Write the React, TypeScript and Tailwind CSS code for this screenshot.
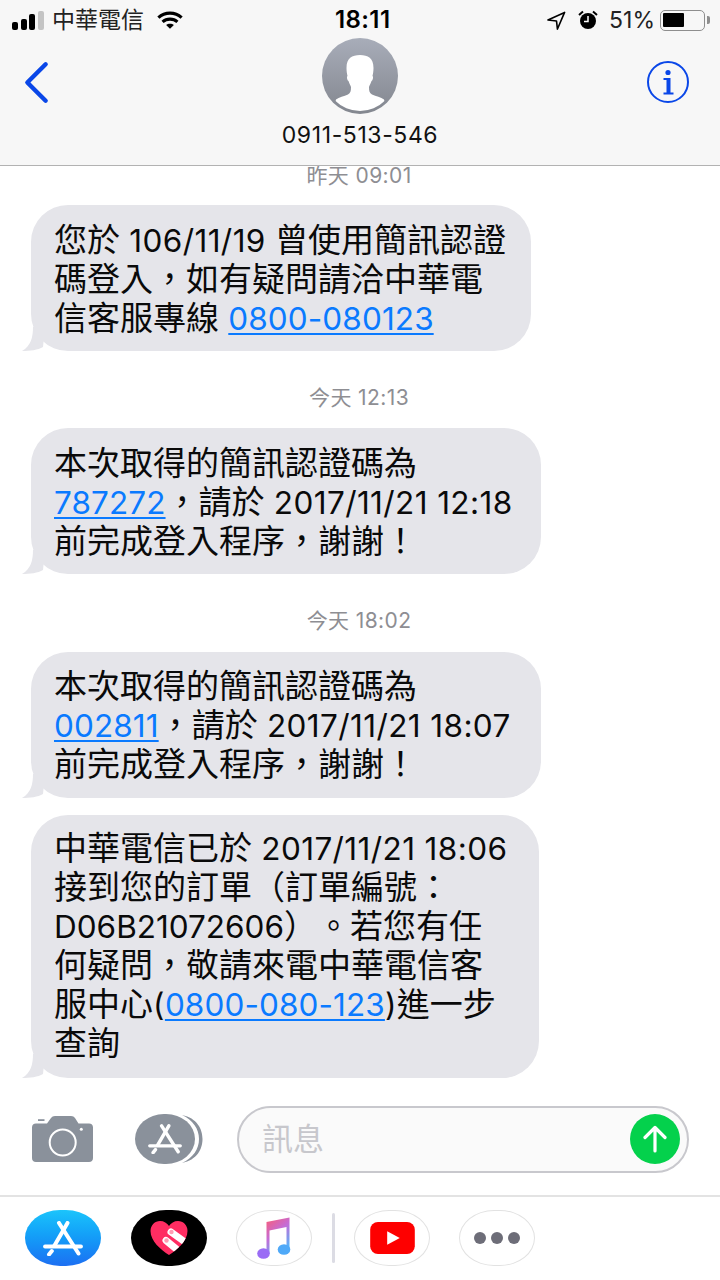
import React from 'react';

const FONT = '"Inter", "Noto Sans CJK TC", sans-serif';

function AppStoreGlyph({ className }: { className?: string }) {
  return (
    <svg viewBox="0 0 40 35" className={className} fill="none" stroke="white" strokeLinecap="round">
      <path d="M16 2 L35.5 32.5" strokeWidth="4" />
      <path d="M24.5 2 L11.5 24.5" strokeWidth="4" />
      <path d="M8.8 30 L6 33.5" strokeWidth="4" />
      <path d="M2 25.5 H38" strokeWidth="3.8" />
    </svg>
  );
}

function Tail() {
  return (
    <svg viewBox="0 0 24 24" className="absolute left-[-10px] bottom-0 h-6 w-6" fill="#e5e5ea">
      <path d="M12 0 C12 10 10 19 1 24 C9 24 17 23 22 20 L24 0 Z" />
    </svg>
  );
}

function Bubble({ width, lines, className = '' }: { width: string; lines: React.ReactNode[]; className?: string }) {
  return (
    <div className={`relative ml-[31px] rounded-[37px] bg-[#e5e5ea] pl-[23px] text-[33px] leading-[39px] text-[#0a0a0a] [text-spacing-trim:space-all] ${width} ${className}`}>
      <Tail />
      {lines.map((l, i) => (
        <div key={i} className="whitespace-nowrap">{l}</div>
      ))}
    </div>
  );
}

// latin runs sit a little smaller than the CJK around them
function Lat({ children }: { children: React.ReactNode }) {
  return <span className="text-[31.5px] tracking-[0.4px]">{children}</span>;
}

function Link({ children }: { children: React.ReactNode }) {
  return <span className="text-[31.5px] tracking-[0.1px] text-[#0a7aff] underline decoration-[2px] underline-offset-[3px]">{children}</span>;
}

function Stamp({ children, className = '' }: { children: React.ReactNode; className?: string }) {
  return <div className={`h-5 pr-[2px] text-center text-[21px] leading-5 tracking-[0.4px] text-[#8e8e93] ${className}`}>{children}</div>;
}

function StatusBar() {
  return (
    <div className="relative flex h-[38px] items-center justify-between pl-[12px] pr-[10px] pt-[2px] text-black">
      <div className="flex items-center">
        <div className="flex items-end gap-[2.5px]">
          <span className="h-[8px] w-[6px] rounded-[2px] bg-black" />
          <span className="h-[11px] w-[6px] rounded-[2px] bg-black" />
          <span className="h-[16px] w-[6px] rounded-[2px] bg-black" />
          <span className="h-[19px] w-[6px] rounded-[2px] bg-[#c4c4c4]" />
        </div>
        <span className="ml-[8.5px] text-[23px] leading-none text-[#222]">中華電信</span>
        <svg viewBox="0 0 28 20" className="ml-[13px] h-[20px] w-[26px]" fill="none" stroke="black" strokeWidth="3.4">
          <path d="M1.5 7.5 C8.5 1 19.5 1 26.5 7.5" />
          <path d="M6 12 C10.5 8 17.5 8 22 12" />
          <path d="M14 19.5 L9.8 15.5 C12 13.6 16 13.6 18.2 15.5 Z" fill="black" stroke="none" />
        </svg>
      </div>
      <span className="absolute left-[335px] top-[7px] text-[24px] font-semibold leading-[26px] tracking-[0.4px]">18:11</span>
      <div className="flex items-center">
        <svg viewBox="0 0 20 20" className="h-[19px] w-[19px]" fill="none" stroke="black" strokeWidth="1.7" strokeLinejoin="round">
          <path d="M1 9.5 L18.5 1.5 L11 19 L10 10.5 Z" />
        </svg>
        <svg viewBox="0 0 20 20" className="ml-[12px] h-[20px] w-[20px]">
          <circle cx="10" cy="11" r="8" fill="black" />
          <path d="M10 6 V11.5 H6" stroke="white" strokeWidth="1.5" fill="none" />
          <path d="M1 5 L5 1.5 M19 5 L15 1.5" stroke="black" strokeWidth="2" />
        </svg>
        <span className="ml-[11px] text-[23px] leading-none text-[#222]">51%</span>
        <div className="ml-[5px] flex h-[21px] w-[45px] items-center rounded-[5px] border-[1.5px] border-[#8e8e8e] pl-[2px]">
          <div className="h-[14px] w-[21px] rounded-[1px] bg-black" />
        </div>
        <span className="ml-[2px] h-[8px] w-[3px] rounded-r-[2px] bg-[#8e8e8e]" />
      </div>
    </div>
  );
}

function Header() {
  return (
    <div className="relative h-[166px] shrink-0 border-b border-[#b2b2b2] bg-[#f7f7f7]">
      <StatusBar />
      <svg viewBox="0 0 26 44" className="absolute left-[24px] top-[61px] h-[43px] w-[25px]" fill="none" stroke="#0a47e8" strokeWidth="4.6" strokeLinecap="round" strokeLinejoin="round">
        <path d="M22.5 3 L3.5 22 L22.5 41" />
      </svg>
      <div className="flex flex-col items-center">
        <svg viewBox="0 0 76 76" className="h-[76px] w-[76px]">
          <defs>
            <linearGradient id="avatarGrad" x1="0" y1="0" x2="0" y2="1">
              <stop offset="0" stopColor="#a8adb9" />
              <stop offset="1" stopColor="#83878f" />
            </linearGradient>
            <clipPath id="avatarClip">
              <circle cx="38" cy="37.5" r="35.5" />
            </clipPath>
          </defs>
          <circle cx="38" cy="38" r="38" fill="url(#avatarGrad)" />
          <path
            clipPath="url(#avatarClip)"
            fill="white"
            d="M38 17 C46 17 51.5 20 51.5 30 C51.5 33 51 36 50.5 38 C51.5 38.5 51 42 49.5 43 C48.5 46 47.5 47 47 49 C47 53 47.5 55 50 56.5 C54 58.5 59 59 62 61.5 L66 76 H10 L14 61.5 C17 59 22 58.5 26 56.5 C28.5 55 29 53 29 49 C28.5 47 27.5 46 26.5 43 C25 42 24.5 38.5 25.5 38 C25 36 24.5 33 24.5 30 C24.5 20 30 17 38 17 Z"
          />
        </svg>
        <div className="mt-[6px] text-[23px] leading-[30px] tracking-[0.6px] text-[#111]">0911-513-546</div>
      </div>
      <svg viewBox="0 0 42 42" className="absolute left-[647px] top-[61px] h-[42px] w-[42px]">
        <circle cx="21" cy="21" r="20" fill="none" stroke="#0a47e8" strokeWidth="2" />
        <circle cx="21" cy="11.5" r="2.6" fill="#0a47e8" />
        <path d="M16.5 17 H23.5 V31.5 H26.5 V33.5 H16.5 V31.5 H19.5 V19 H16.5 Z" fill="#0a47e8" />
      </svg>
    </div>
  );
}

function Composer() {
  return (
    <div className="flex h-[117px] shrink-0 items-center pt-[5px]">
      <svg viewBox="0 0 61 46" className="ml-[32px] h-[46px] w-[61px]">
        <path fill="#8a919b" d="M6 3.2 H12.5 V5 H6 Z" />
        <path
          fill="#8a919b"
          d="M4 7.5 H15 L19 2 C20 0.7 21 0 23 0 H39 C41 0 42 0.7 43 2 L46.5 7.5 H57 C59.5 7.5 61 9 61 11.5 V42 C61 44.5 59.5 46 57 46 H4 C1.5 46 0 44.5 0 42 V11.5 C0 9 1.5 7.5 4 7.5 Z"
        />
        <circle cx="30.7" cy="26.5" r="13" fill="none" stroke="white" strokeWidth="2" />
        <circle cx="49.3" cy="13.3" r="1.5" fill="white" />
      </svg>
      <div className="relative ml-[42px] h-[50px] w-[68px]">
        <svg viewBox="0 0 68 50" className="absolute inset-0 h-[50px] w-[68px]" fill="#8a919b">
          <path d="M47 1 C62 4 67.5 15 67.5 25 C67.5 35 62 46 47 49 C58 44 64 35 64 25 C64 15 58 6 47 1 Z" />
        </svg>
        <div className="flex h-[50px] w-[60px] items-center justify-center rounded-[29px/25px] bg-[#8a919b]">
          <AppStoreGlyph className="h-[30px] w-[34px]" />
        </div>
      </div>
      <div className="relative ml-[34px] flex h-[67px] w-[452px] items-center rounded-[34px] border-2 border-[#c8c8cd] bg-[#fafafa] pl-[23px] text-[31px] text-[#c7c7cc]">
        訊息
        <div className="absolute right-[7px] top-[6px] flex h-[50px] w-[50px] items-center justify-center rounded-full bg-[#04d14c]">
          <svg viewBox="0 0 24 28" className="h-[28px] w-[24px]" fill="none" stroke="white" strokeWidth="3.2" strokeLinecap="round" strokeLinejoin="round">
            <path d="M12 26 V3 M2 12.5 L12 2.5 L22 12.5" />
          </svg>
        </div>
      </div>
    </div>
  );
}

const pill = 'flex h-[56px] w-[76px] items-center justify-center rounded-[35px/28px]';

function AppStrip() {
  return (
    <div className="flex h-[85px] shrink-0 items-start border-t-2 border-[#e3e3e3] bg-white pl-[25px] pt-[13px]">
      <div className={`${pill} bg-gradient-to-b from-[#1cc4fb] to-[#1d6ff2]`}>
        <AppStoreGlyph className="h-[35px] w-[40px]" />
      </div>
      <div className={`${pill} ml-[30px] bg-black`}>
        <svg viewBox="0 0 38 34" className="h-[34px] w-[38px]">
          <defs>
            <clipPath id="heartClip">
              <path d="M19 34 C11 29 0.5 20 0.5 10 C0.5 4 5 0 10 0 C14 0 17 2 19 5 C21 2 24 0 28 0 C33 0 37.5 4 37.5 10 C37.5 20 27 29 19 34 Z" />
            </clipPath>
          </defs>
          <g clipPath="url(#heartClip)">
            <rect width="38" height="34" fill="#ff2d62" />
            <path d="M21 11 L37 22.5" stroke="white" strokeWidth="7" strokeLinecap="round" />
            <path d="M16 19.5 L30 31" stroke="white" strokeWidth="7" strokeLinecap="round" />
            <circle cx="21.5" cy="11" r="2.2" fill="#ff9db4" />
            <circle cx="16.5" cy="19.5" r="2.2" fill="#ff9db4" />
          </g>
        </svg>
      </div>
      <div className={`${pill} ml-[29px] border border-[#e2e2e2]`}>
        <svg viewBox="0 0 34 42" className="h-[42px] w-[34px]">
          <defs>
            <linearGradient id="noteGrad" x1="0" y1="0" x2="0.5" y2="1">
              <stop offset="0" stopColor="#fb5c74" />
              <stop offset="0.5" stopColor="#c56cd6" />
              <stop offset="1" stopColor="#5ab1f8" />
            </linearGradient>
          </defs>
          <path fill="url(#noteGrad)" d="M9.5 5 L32.5 0.5 V33 H29.5 V10 L12.5 13.5 V37 H9.5 Z" />
          <ellipse cx="6.5" cy="36.5" rx="6.3" ry="5.3" fill="#9a6cf5" />
          <ellipse cx="27" cy="32.5" rx="6.3" ry="5.3" fill="#4fa9f8" />
        </svg>
      </div>
      <div className="ml-[20px] mt-[3px] h-[50px] w-[3px] rounded-full bg-[#dcdce4]" />
      <div className={`${pill} ml-[19px] border border-[#e2e2e2]`}>
        <svg viewBox="0 0 46 33" className="h-[32px] w-[45px]">
          <rect width="46" height="33" rx="8" fill="#fe0000" />
          <path d="M17.5 9.5 L30.5 16.5 L17.5 23.5 Z" fill="white" />
        </svg>
      </div>
      <div className={`${pill} ml-[29px] gap-[5px] border border-[#e2e2e2]`}>
        <span className="h-[12px] w-[12px] rounded-full bg-[#6d6d78]" />
        <span className="h-[12px] w-[12px] rounded-full bg-[#6d6d78]" />
        <span className="h-[12px] w-[12px] rounded-full bg-[#6d6d78]" />
      </div>
    </div>
  );
}

export default function App() {
  return (
    <div className="flex h-[1280px] w-[720px] flex-col overflow-hidden bg-white" style={{ fontFamily: FONT }}>
      <Header />
      <div className="flex h-[912px] shrink-0 flex-col">
        <Stamp>昨天 09:01</Stamp>
        <Bubble
          width="w-[500px]"
          className="mt-[19px] pt-[16px] pb-[13px]"
          lines={[
            <>您於 <Lat>106/11/19</Lat> 曾使用簡訊認證</>,
            '碼登入，如有疑問請洽中華電',
            <>信客服專線 <Link>0800-080123</Link></>,
          ]}
        />
        <Stamp className="mt-[37px]">今天 12:13</Stamp>
        <Bubble
          width="w-[510px]"
          className="mt-[20px] pt-[16px] pb-[13px]"
          lines={[
            '本次取得的簡訊認證碼為',
            <><Link>787272</Link>，請於 <Lat>2017/11/21 12:18</Lat></>,
            '前完成登入程序，謝謝！',
          ]}
        />
        <Stamp className="mt-[37px]">今天 18:02</Stamp>
        <Bubble
          width="w-[510px]"
          className="mt-[21px] pt-[15px] pb-[14px]"
          lines={[
            '本次取得的簡訊認證碼為',
            <><Link>002811</Link>，請於 <Lat>2017/11/21 18:07</Lat></>,
            '前完成登入程序，謝謝！',
          ]}
        />
        <Bubble
          width="w-[508px]"
          className="mt-[17px] pt-[14px] pb-[15px]"
          lines={[
            <>中華電信已於 <Lat>2017/11/21 18:06</Lat></>,
            '接到您的訂單（訂單編號：',
            <><span className="text-[31.5px]">D06B21072606</span>）。若您有任</>,
            '何疑問，敬請來電中華電信客',
            <>服中心<Lat>(</Lat><Link>0800-080-123</Link><Lat>)</Lat>進一步</>,
            '查詢',
          ]}
        />
      </div>
      <Composer />
      <AppStrip />
    </div>
  );
}
